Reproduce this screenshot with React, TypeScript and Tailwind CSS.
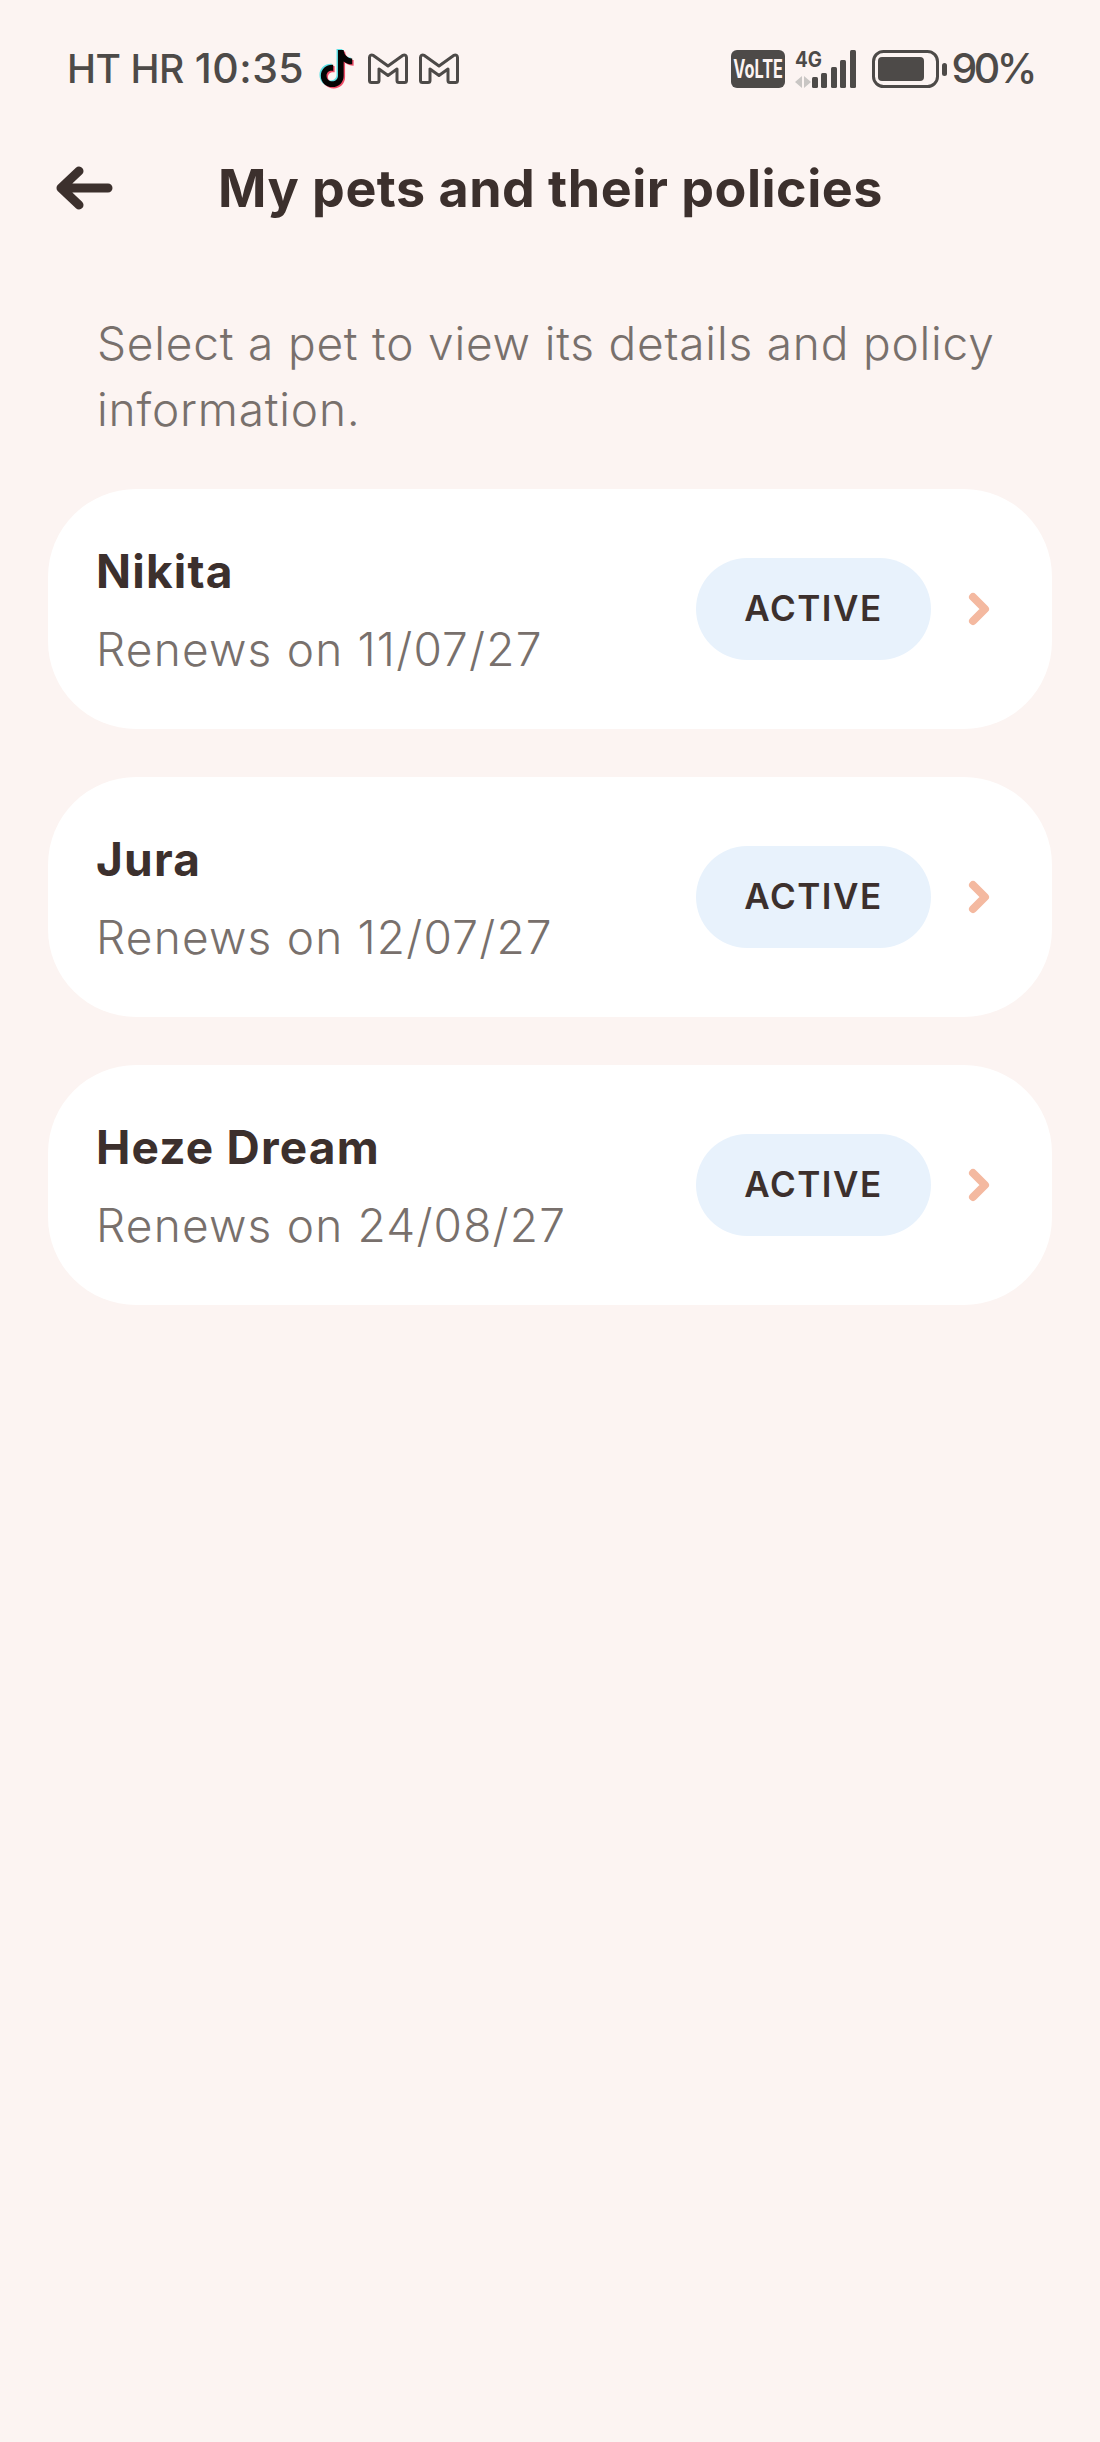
import React from 'react';

const pets = [
  { name: 'Nikita', renews: 'Renews on 11/07/27' },
  { name: 'Jura', renews: 'Renews on 12/07/27' },
  { name: 'Heze Dream', renews: 'Renews on 24/08/27' },
];

const TIKTOK =
  'M21 1h6c.5 5 3.6 8.4 9 9v6c-3.4 0-6.400-1-9-3v15c0 7-5 12-12 12S3 35 3 28s6-12 13-11.500v6.500c-4-.8-7 1.500-7 5s2.500 6 6 6 6-2.500 6-6z';

const TikTokIcon = () => (
  <svg width="38" height="42" viewBox="0 0 40 42" className="shrink-0">
    <path d={TIKTOK} fill="#5fe0e6" transform="translate(-1.500 -1)" />
    <path d={TIKTOK} fill="#ee4d68" transform="translate(1.500 1.500)" />
    <path d={TIKTOK} fill="#050505" />
  </svg>
);

const MailIcon = () => (
  <svg width="42" height="32" viewBox="0 0 42 32" fill="none" stroke="#4d4a48" strokeWidth="3" strokeLinejoin="round" className="shrink-0">
    <path d="M2.500 4.500c0-2 1.800-3.200 3.500-2.200L21 13 36 2.300c1.700-1 3.500.2 3.500 2.200v23c0 1.200-.8 2-2 2H32c-1.200 0-2-.8-2-2V16l-9 6.500-9-6.500v11.500c0 1.200-.8 2-2 2H4.500c-1.200 0-2-.8-2-2z" />
  </svg>
);

const SignalIcon = () => (
  <svg width="44" height="38" viewBox="0 0 44 38" fill="#4d4a48" className="shrink-0">
    <rect x="0" y="27" width="6" height="11" rx="1.500" />
    <rect x="9" y="23" width="6" height="15" rx="1.500" />
    <rect x="19" y="17" width="6" height="21" rx="1.500" />
    <rect x="28" y="10" width="6" height="28" rx="1.500" />
    <rect x="38" y="0" width="6" height="38" rx="1.500" />
  </svg>
);

const BatteryIcon = () => (
  <svg width="76" height="38" viewBox="0 0 76 38" className="shrink-0">
    <rect x="1.500" y="1.500" width="64" height="35" rx="10" fill="none" stroke="#4d4a48" strokeWidth="3" />
    <rect x="6" y="7" width="46" height="24" rx="4" fill="#4d4a48" />
    <rect x="70" y="13" width="5" height="13" rx="2.500" fill="#4d4a48" />
  </svg>
);

const Chevron = () => (
  <svg width="24" height="34" viewBox="0 0 24 34" fill="none" stroke="#f4b9a0" strokeWidth="8" strokeLinecap="round" strokeLinejoin="round" className="shrink-0">
    <path d="M5 5l12 12L5 29" />
  </svg>
);

const StatusBar = () => (
  <div className="h-[136px] pt-[2px] flex items-center justify-between pl-[67px] pr-[66px] text-[#4d4a48]">
    <div className="flex items-center">
      <span className="text-[39px] font-medium tracking-[-0.5px]">HT HR</span>
      <span className="text-[41px] font-medium ml-[11px] tracking-[0.5px]">10:35</span>
      <span className="ml-[14px] flex"><TikTokIcon /></span>
      <span className="ml-[11px] flex"><MailIcon /></span>
      <span className="ml-[9px] flex"><MailIcon /></span>
    </div>
    <div className="flex items-center">
      <span className="flex items-center justify-center w-[54px] h-[38px] bg-[#4d4a48] rounded-[6px] text-[#fdf4f2] overflow-hidden">
        <span className="inline-block shrink-0 whitespace-nowrap text-[25px] leading-none font-bold scale-x-[0.65]">VoLTE</span>
      </span>
      <div className="relative w-[61px] h-[38px] ml-[10px]">
        <span className="absolute left-0 top-[-3px] origin-left scale-x-[0.9] text-[21px] font-bold leading-[26px]">4G</span>
        <svg width="16" height="12" viewBox="0 0 16 12" fill="#c9c6c4" className="absolute left-0 bottom-0">
          <path d="M7 0v12L0 6zM9 0l7 6-7 6z" />
        </svg>
        <span className="absolute right-0 top-0 flex"><SignalIcon /></span>
      </div>
      <span className="ml-[16px] flex"><BatteryIcon /></span>
      <span className="text-[41px] font-medium ml-[3px] tracking-[-3.500px]">90%</span>
    </div>
  </div>
);

const PetCard = ({ name, renews }: { name: string; renews: string }) => (
  <div className="h-[240px] bg-white rounded-[88px] flex items-center pl-[48px] pr-[60px]">
    <div className="flex-1 pt-[2px]">
      <div className="text-[46px] leading-[60px] font-bold text-[#3c302d] tracking-[1.200px]">{name}</div>
      <div className="mt-[18px] text-[46px] leading-[60px] font-light text-[#78706c] tracking-[1.200px]">{renews}</div>
    </div>
    <div className="w-[235px] h-[102px] pb-[2px] rounded-full bg-[#e8f2fc] flex items-center justify-center text-[35px] font-semibold text-[#3c302d] tracking-[1.500px]">
      ACTIVE
    </div>
    <div className="ml-[37px] flex"><Chevron /></div>
  </div>
);

const App: React.FC = () => {
  return (
    <div className="min-h-[2442px] bg-[#fcf4f2] font-[Inter,sans-serif]">
      <StatusBar />
      <div className="h-[104px] flex items-center pl-[55px]">
        <svg width="58" height="46" viewBox="0 0 58 46" fill="none" stroke="#3c302d" strokeWidth="9" strokeLinecap="round" strokeLinejoin="round" className="shrink-0">
          <path d="M53 23H6M24 6L6 23l18 17" />
        </svg>
        <h1 className="ml-[105px] pt-[2px] text-[52px] font-bold text-[#3c302d] tracking-[0.500px]">My pets and their policies</h1>
      </div>
      <p className="mt-[70px] pl-[97px] pr-[90px] text-[46px] leading-[66px] font-light text-[#78706c] tracking-[0.800px]">
        Select a pet to view its details and policy information.
      </p>
      <div className="mt-[47px] mx-[48px] flex flex-col gap-[48px]">
        {pets.map((pet) => (
          <PetCard key={pet.name} name={pet.name} renews={pet.renews} />
        ))}
      </div>
    </div>
  );
};

export default App;
